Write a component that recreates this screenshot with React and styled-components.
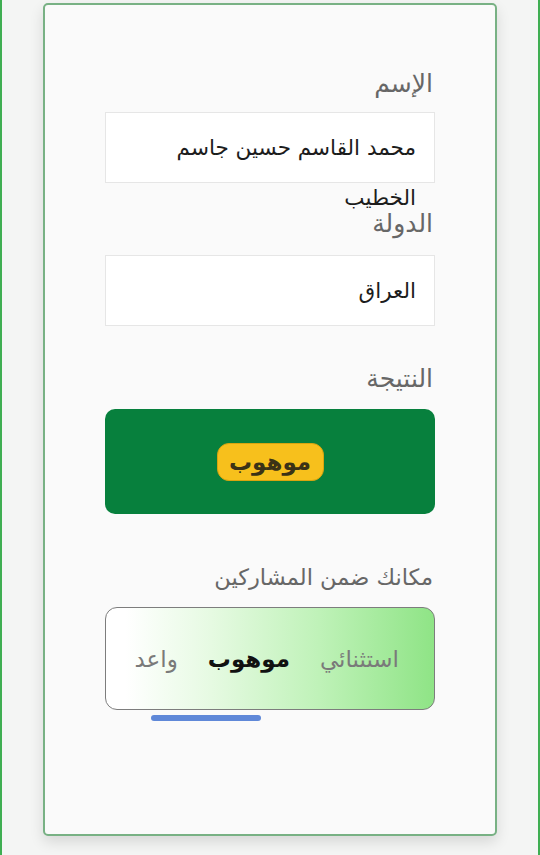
import styled, { createGlobalStyle } from "styled-components";

const GlobalStyle = createGlobalStyle`
  html, body {
    margin: 0;
    padding: 0;
    background: #f4f5f4;
  }
  body {
    font-family: "DejaVu Sans", "Noto Sans", sans-serif;
  }
`;

const Page = styled.div`
  min-height: 855px;
  box-sizing: border-box;
  border-left: 2px solid #3fae52;
  border-right: 2px solid #3fae52;
  padding: 3px 0 0 41px;
  direction: ltr;
`;

const Card = styled.div`
  width: 454px;
  height: 833px;
  box-sizing: border-box;
  background: #fafafa;
  border: 2px solid #78b184;
  border-radius: 5px;
  box-shadow: 0 6px 14px rgba(0, 0, 0, 0.12);
  padding: 64px 60px 0 60px;
  direction: rtl;
`;

const Section = styled.div`
  margin-top: ${(p) => p.$top || 0}px;
`;

const Label = styled.div`
  height: 30px;
  line-height: 30px;
  font-size: ${(p) => p.$size || 25}px;
  color: #676767;
  padding-right: 2px;
  margin-bottom: ${(p) => p.$gap || 15}px;
  letter-spacing: ${(p) => p.$spacing || 0}px;
`;

const Field = styled.div`
  height: 71px;
  box-sizing: border-box;
  background: #ffffff;
  border: 1px solid #e6e6e6;
  padding: 10px 18px 0 18px;
  font-size: 21.5px;
  line-height: 50px;
  color: #1c1c1c;
  white-space: nowrap;
`;

const ResultBox = styled.div`
  height: 105px;
  background: #07803d;
  border-radius: 10px;
  display: flex;
  align-items: center;
  justify-content: center;
`;

const Pill = styled.div`
  width: 107px;
  height: 38px;
  box-sizing: border-box;
  background: #f7c01c;
  border: 1px solid #d9a40f;
  border-radius: 12px;
  display: flex;
  align-items: center;
  justify-content: center;
  font-size: 23px;
  font-weight: 600;
  color: #3b3216;
`;

const RankBox = styled.div`
  height: 103px;
  box-sizing: border-box;
  border: 1px solid #7d7d7d;
  border-radius: 12px;
  background: linear-gradient(
    90deg,
    #ffffff 6%,
    #e6fae2 32%,
    #bff2b8 65%,
    #8fe486 100%
  );
  display: flex;
  align-items: center;
  gap: 30px;
  padding-right: 35px;
`;

const Rank = styled.span`
  font-size: 23px;
  color: ${(p) => (p.$active ? "#111111" : "#7a7a7a")};
  font-weight: ${(p) => (p.$active ? 700 : 400)};
`;

const Indicator = styled.div`
  width: 110px;
  height: 6px;
  margin: 5px 174px 0 0;
  background: #5f88d8;
  border-radius: 3px;
`;

export default function App() {
  return (
    <>
      <GlobalStyle />
      <Page>
        <Card>
          <Section>
            <Label $gap={13}>الإسم</Label>
            <Field>
              محمد القاسم حسين جاسم
              <br />
              الخطيب
            </Field>
          </Section>
          <Section $top={26}>
            <Label $gap={16}>الدولة</Label>
            <Field>العراق</Field>
          </Section>
          <Section $top={38}>
            <Label>النتيجة</Label>
            <ResultBox>
              <Pill>موهوب</Pill>
            </ResultBox>
          </Section>
          <Section $top={48}>
            <Label $size={22.5} $spacing={2.2}>مكانك ضمن المشاركين</Label>
            <RankBox>
              <Rank>استثنائي</Rank>
              <Rank $active>موهوب</Rank>
              <Rank>واعد</Rank>
            </RankBox>
            <Indicator />
          </Section>
        </Card>
      </Page>
    </>
  );
}
